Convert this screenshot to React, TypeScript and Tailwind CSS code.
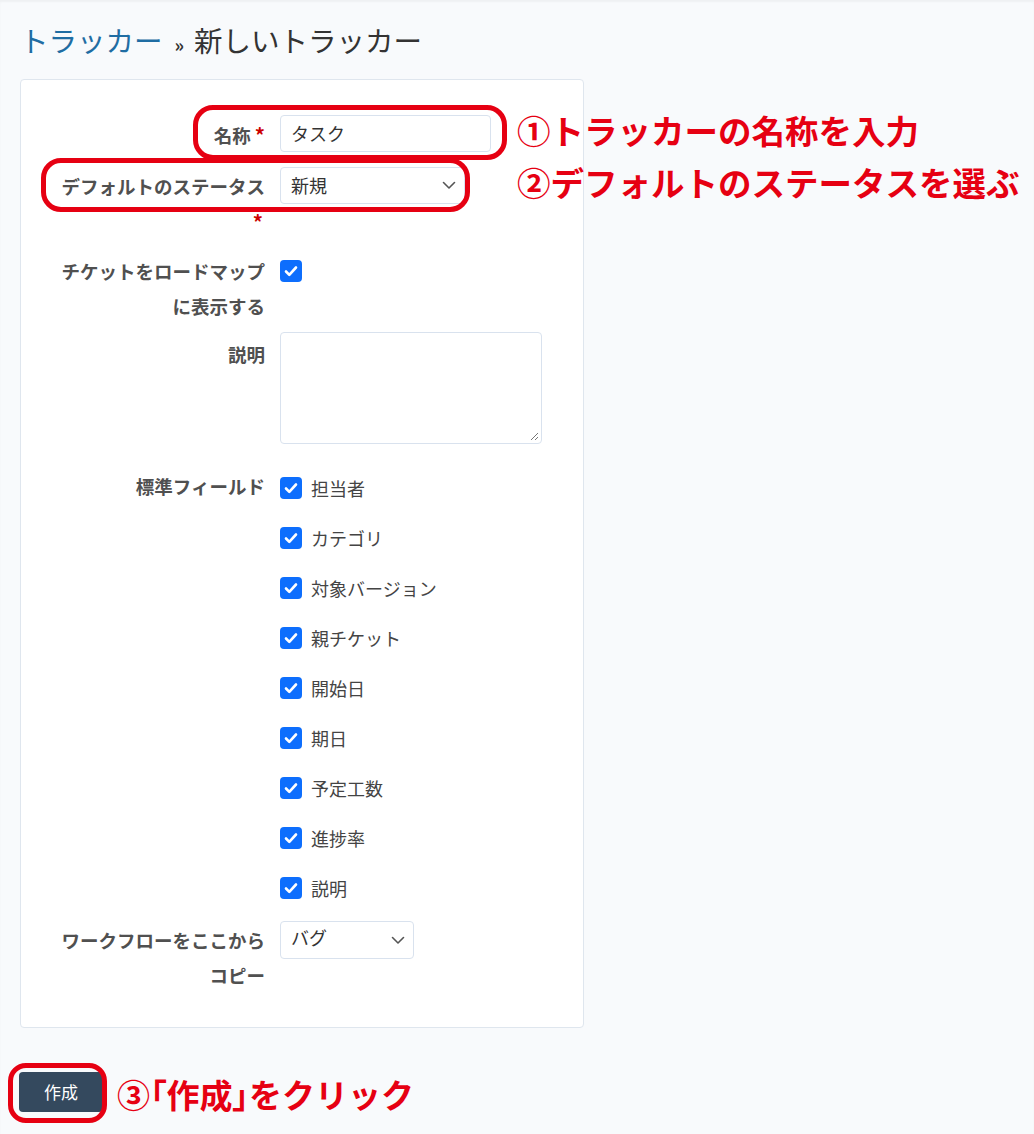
import React from "react";

const jp = { fontFamily: '"Noto Sans CJK JP", "Noto Sans", sans-serif' };

function Check() {
  return (
    <span className="inline-flex h-[22px] w-[22px] shrink-0 items-center justify-center rounded-[4px] bg-[#0d6efd]">
      <svg width="14" height="12" viewBox="0 0 14 12" fill="none">
        <path d="M2 6.5 L5.3 9.8 L12 2.5" stroke="white" strokeWidth="2.6" strokeLinecap="round" strokeLinejoin="round" />
      </svg>
    </span>
  );
}

function Chevron() {
  return (
    <svg width="14" height="9" viewBox="0 0 14 9" fill="none">
      <path d="M1.5 1.5 L7 7 L12.5 1.5" stroke="#555" strokeWidth="1.6" strokeLinecap="round" strokeLinejoin="round" />
    </svg>
  );
}

const fields = ["担当者", "カテゴリ", "対象バージョン", "親チケット", "開始日", "期日", "予定工数", "進捗率", "説明"];

export default function App() {
  return (
    <div className="relative min-h-[1134px] w-[1034px] bg-[#f8fafc] shadow-[inset_0_2px_2px_rgba(0,0,0,0.04)]" style={jp}>
      <div className="px-[20px] pt-[20px]">
        <h2 className="text-[28.5px] leading-[40px] text-[#333]">
          <span className="text-[#1f6da3]">トラッカー</span>
          <span className="ml-[12px] mr-[10px] text-[18px] font-bold">»</span>
          <span>新しいトラッカー</span>
        </h2>

        <div className="mt-[15px] w-[564px] rounded-[4px] border border-[#dfe6ee] bg-white pt-[35px] pb-[34px]">
          {/* name */}
          <div className="flex">
            <div className="w-[244px] shrink-0 pt-[2px] text-right text-[18.5px] font-bold leading-[35px] text-[#505050]">
              名称 <span className="text-[20px] text-[#c00]">*</span>
            </div>
            <div className="ml-[15px]">
              <div className="flex h-[37px] w-[211px] items-center rounded-[4px] border border-[#d9e2ee] px-[10px] text-[18px] text-[#333]">
                タスク
              </div>
            </div>
          </div>
          {/* default status */}
          <div className="mt-[14px] flex">
            <div className="w-[244px] shrink-0 pt-[2px] text-right text-[18.5px] font-bold leading-[35px] text-[#505050]">
              デフォルトのステータス
              <br />
              <span className="mr-[2px] text-[20px] text-[#c00]">*</span>
            </div>
            <div className="ml-[15px]">
              <div className="flex h-[37px] w-[185px] items-center justify-between rounded-[4px] border border-[#d9e2ee] pl-[10px] pr-[8px] text-[18px] text-[#333]">
                <span>新規</span>
                <Chevron />
              </div>
            </div>
          </div>
          {/* roadmap */}
          <div className="mt-[12px] flex">
            <div className="w-[244px] shrink-0 pt-[2px] text-right text-[18.5px] font-bold leading-[35px] text-[#505050]">
              チケットをロードマップ
              <br />
              に表示する
            </div>
            <div className="ml-[15px] pt-[6px]">
              <Check />
            </div>
          </div>
          {/* description */}
          <div className="mt-[8px] flex">
            <div className="w-[244px] shrink-0 pt-[5px] text-right text-[18.5px] font-bold leading-[35px] text-[#505050]">
              説明
            </div>
            <div className="ml-[15px]">
              <div className="relative h-[112px] w-[262px] rounded-[4px] border border-[#d9e2ee]">
                <svg className="absolute bottom-[2px] right-[2px]" width="9" height="9" viewBox="0 0 9 9">
                  <path d="M8 1 L1 8 M8 5 L5 8" stroke="#777" strokeWidth="1" />
                </svg>
              </div>
            </div>
          </div>
          {/* standard fields */}
          <div className="mt-[19px] flex">
            <div className="w-[244px] shrink-0 pt-[6px] text-right text-[18.5px] font-bold leading-[35px] text-[#505050]">
              標準フィールド
            </div>
            <div className="ml-[15px] flex flex-col">
              {fields.map((f) => (
                <div key={f} className="flex h-[50px] items-center gap-[9px] text-[18px] text-[#444]">
                  <Check />
                  <span>{f}</span>
                </div>
              ))}
            </div>
          </div>
          {/* workflow */}
          <div className="mt-[8px] flex">
            <div className="w-[244px] shrink-0 pt-[2px] text-right text-[18.5px] font-bold leading-[35px] text-[#505050]">
              ワークフローをここから
              <br />
              コピー
            </div>
            <div className="ml-[15px]">
              <div className="flex h-[38px] w-[134px] items-center justify-between rounded-[4px] border border-[#d9e2ee] pl-[10px] pr-[8px] text-[18px] text-[#333]">
                <span className="-mt-[6px]">バグ</span>
                <Chevron />
              </div>
            </div>
          </div>
        </div>

        <div className="mt-[44px]">
          <button className="-ml-[1px] flex h-[40px] w-[84px] items-center justify-center rounded-[4px] bg-[#34495e] text-[17px] text-white">
            作成
          </button>
        </div>
      </div>

      {/* annotation overlays */}
      <div className="pointer-events-none absolute left-[193px] top-[105px] h-[55px] w-[314px] rounded-[20px] border-[5px] border-[#e60012]" />
      <div className="pointer-events-none absolute left-[41px] top-[158px] h-[54px] w-[429px] rounded-[20px] border-[5px] border-[#e60012]" />
      <div className="pointer-events-none absolute left-[8px] top-[1063px] h-[60px] w-[99px] rounded-[18px] border-[5px] border-[#e60012]" />

      <div className="absolute left-[517px] top-[108px] text-[33.5px] font-bold leading-[44px] text-[#e60012]">①トラッカーの名称を入力</div>
      <div className="absolute left-[517px] top-[160px] text-[33.5px] font-bold leading-[44px] text-[#e60012]">②デフォルトのステータスを選ぶ</div>
      <div className="absolute left-[117px] top-[1072px] text-[33px] font-bold leading-[44px] text-[#e60012]">
        ③<span className="[font-feature-settings:'palt']">「</span>作成<span className="[font-feature-settings:'palt']">」</span>をクリック
      </div>
    </div>
  );
}
